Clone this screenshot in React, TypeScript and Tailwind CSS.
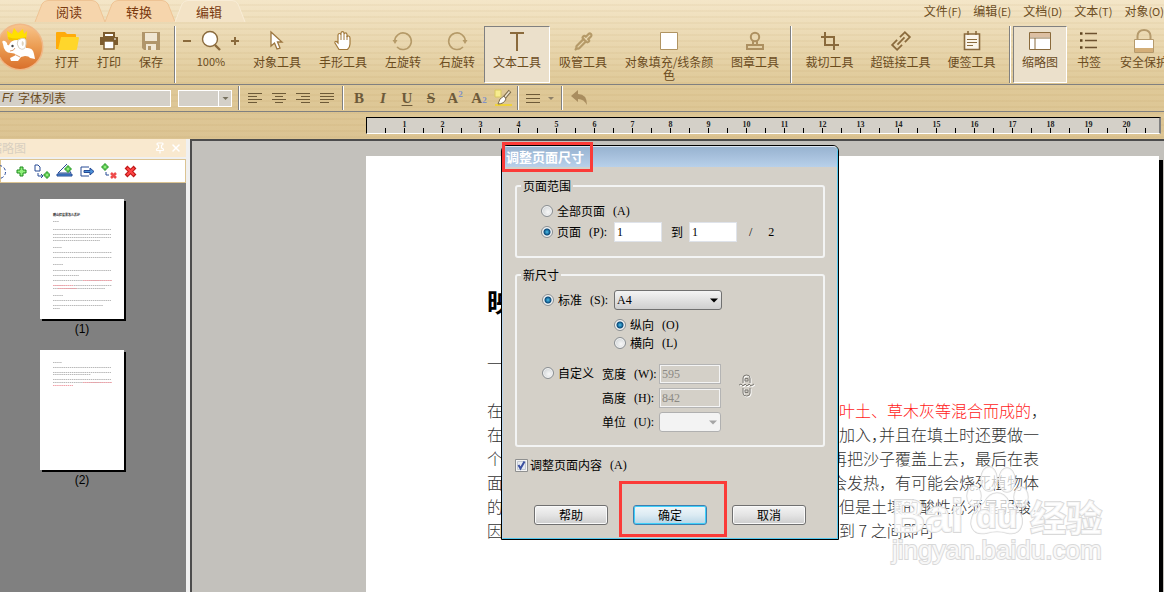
import { useState } from 'react';
import type { ReactNode } from 'react';
import { Pipette, Pin, X } from 'lucide-react';

const BROWN = '#8a6a3c';
const FADED = '#b59a68';

function Icon({ children, size = 22 }: { children: ReactNode; size?: number }) {
  return (
    <svg width={size} height={size} viewBox={`0 0 ${size} ${size}`} fill="none" className="shrink-0">
      {children}
    </svg>
  );
}

function Separator() {
  return <div className="mx-0.5 w-0.5 shrink-0 self-stretch border-l border-r border-l-[#808080] border-r-white" />;
}

interface ToolProps {
  label: string;
  width: string;
  selected?: boolean;
  children: ReactNode;
}

function Tool({ label, width, selected, children }: ToolProps) {
  return (
    <button
      type="button"
      className={`${width} flex shrink-0 flex-col items-center border pt-1 ${
        selected
          ? 'border-t-[#808080] border-r-white border-b-white border-l-[#808080] bg-[#ebe0cb]'
          : 'border-transparent'
      }`}
    >
      <span className="flex h-5 items-center justify-center">{children}</span>
      <span className="mt-1 w-full px-1 text-center text-xs leading-[13px]">{label}</span>
    </button>
  );
}

function Tab({ label, active }: { label: string; active?: boolean }) {
  return (
    <button type="button" className="relative h-[22px] w-[70px] text-[13px] leading-6 text-[#7a3a10]">
      <svg className="absolute inset-0" width="72" height="22" viewBox="0 0 72 22">
        <path
          d="M1 22 L8 4 Q10 0.5 14 0.5 H58 Q62 0.5 64 4 L71 22"
          fill={active ? '#f3e3c6' : '#f6d5ac'}
          stroke={active ? '#f8ecd6' : '#eec394'}
        />
      </svg>
      <span className="relative">{label}</span>
    </button>
  );
}

function Logo() {
  return (
    <svg width="48" height="50" viewBox="0 0 48 50" className="-ml-1 shrink-0">
      <defs>
        <linearGradient id="logo" x1="0" y1="0" x2="0" y2="1">
          <stop offset="0" stopColor="#f8c48a" />
          <stop offset="0.5" stopColor="#eb9c52" />
          <stop offset="1" stopColor="#d9702c" />
        </linearGradient>
      </defs>
      <circle cx="24" cy="25" r="23.5" fill="#f0b888" />
      <circle cx="24" cy="25" r="22" fill="url(#logo)" />
      <path d="M12 17 L11 9 L16 12 L18 6 L22 11 L27 7 L28 12 L31 9 L30 18 Z" fill="#ffe000" />
      <path d="M12 15 Q20 18 30 15 L30 18 Q22 20 13 18 Z" fill="#f2c200" />
      <path
        d="M7 22 Q5 18 9 19 L11 21 Q11 24 13 23 Q15 18 21 18 Q29 17 30 26 Q37 25 38 32 L39 37 L34 36 Q33 34 29 34 L25 35 L22 39 L15 39 L14 36 L20 33 Q19 31 15 31 Q8 31 7 22 Z"
        fill="#fff"
      />
      <path d="M22 18 Q31 13 30 22 Q29 30 23 26 Q20 22 22 18 Z" fill="#fff" stroke="#d8cfbe" />
      <path d="M26 19 Q29 20 27 24 Q25 24 26 19 Z" fill="#ddd2bd" />
      <circle cx="16.5" cy="24" r="1.2" fill="#444" />
      <path d="M14 29 Q18 29 19 26 M24 35 L20 33" stroke="#e0a070" fill="none" />
    </svg>
  );
}

function AlignIcon({ rows }: { rows: [number, number][] }) {
  return (
    <Icon size={14}>
      {rows.map(([start, end], i) => (
        <path key={i} d={`M${start} ${2.5 + i * 3} H${end}`} stroke="#6d5a38" />
      ))}
    </Icon>
  );
}

function FormatButton({ children, label }: { children: ReactNode; label: string }) {
  return (
    <button
      type="button"
      aria-label={label}
      className="flex w-6 shrink-0 items-center justify-center font-['Liberation_Serif',serif] text-[15px] font-bold text-[#6d5a3a]"
    >
      {children}
    </button>
  );
}

const menus = [
  ['文件', '(F)'],
  ['编辑', '(E)'],
  ['文档', '(D)'],
  ['文本', '(T)'],
  ['对象', '(O)'],
];

function TopRow() {
  return (
    <div className="flex h-[22px] justify-between overflow-hidden">
      <div className="flex pl-[34px]">
        <Tab label="阅读" />
        <Tab label="转换" />
        <Tab label="编辑" active />
      </div>
      <nav className="flex gap-3 text-xs leading-5">
        {menus.map(([name, key]) => (
          <button key={name} type="button" className="whitespace-nowrap">
            {name}
            <span className="text-[11px]">{key}</span>
          </button>
        ))}
      </nav>
    </div>
  );
}

function Toolbar() {
  return (
    <div className="flex h-[62px] items-start overflow-hidden">
      <Logo />
      <div className="ml-0.5 mt-1 flex h-[57px] min-w-0 items-stretch">
        <Tool label="打开" width="w-[42px]">
          <Icon size={24}>
            <path d="M1 4 Q1 3 2 3 H10 L12 5 H20 Q21 5 21 6 V20 H1 Z" fill="#ffab0a" />
            <path d="M6 8 H23 Q24 8 24 9 L22 20 Q22 21 21 21 H3 Z" fill="#ffd62b" />
          </Icon>
        </Tool>
        <Tool label="打印" width="w-[42px]">
          <Icon>
            <path d="M6 3 H16 V7 H6 Z" fill="#fff" stroke="#7d5c2e" strokeWidth="2" />
            <path d="M2 7 H20 V15 H2 Z" fill="#7d5c2e" />
            <path d="M6 11 H16 V19 H6 Z" fill="#fff" stroke="#7d5c2e" strokeWidth="1.5" />
            <path d="M16 9 H18" stroke="#fff" />
          </Icon>
        </Tool>
        <Tool label="保存" width="w-[42px]">
          <Icon>
            <path d="M2 2 H20 V20 H4 L2 18 Z" fill="#b0956a" />
            <path d="M5 3 H17 V11 H5 Z" fill="#f0e6d2" />
            <path d="M6 14 H16 V20 H6 Z" fill="#f0e6d2" />
            <path d="M8 16 H11 V20 H8 Z" fill="#b0956a" />
          </Icon>
        </Tool>
        <Separator />
        <div className="flex w-[66px] shrink-0 flex-col items-center pt-[5px]">
          <div className="flex h-5 w-full items-center justify-between px-1">
            <button type="button" aria-label="缩小">
              <Icon size={10}>
                <path d="M1 5 H9" stroke={BROWN} strokeWidth="2" />
              </Icon>
            </button>
            <Icon>
              <circle cx="10" cy="9" r="7.5" fill="#fff" stroke={BROWN} strokeWidth="1.4" />
              <path d="M15 15 L20 20" stroke={BROWN} strokeWidth="2.4" />
            </Icon>
            <button type="button" aria-label="放大">
              <Icon size={10}>
                <path d="M1 5 H9 M5 1 V9" stroke={BROWN} strokeWidth="2" />
              </Icon>
            </button>
          </div>
          <span className="mt-1 text-[11px] leading-[13px]">100%</span>
        </div>
        <Tool label="对象工具" width="w-[66px]">
          <Icon>
            <path d="M5 2 V16 L8.5 13 L11 19 L14 18 L11.5 12 H16 Z" fill="#fff" stroke="#9c7640" strokeWidth="1.3" />
          </Icon>
        </Tool>
        <Tool label="手形工具" width="w-[66px]">
          <Icon>
            <path
              d="M7 19.5 L3 13 Q2.5 11 4.5 11.5 L6 13 V5 Q6.2 3.5 7.5 3.5 Q8.7 3.5 9 5 V3 Q9.2 1.7 10.5 1.7 Q11.8 1.7 12 3 V4 Q12.3 2.8 13.5 2.8 Q14.8 2.8 15 4.5 V7 Q15.5 5.8 16.5 6 Q18 6.2 18 8 V14 Q18 17 15.5 19.5 Z"
              fill="#fff"
              stroke="#a27a3c"
              strokeWidth="1.2"
            />
            <path d="M9 5 V10 M12 4 V10 M15 6 V10" stroke="#a27a3c" />
          </Icon>
        </Tool>
        <Tool label="左旋转" width="w-[54px]">
          <Icon>
            <path d="M5 17 A8.3 8.3 0 1 0 2.7 11" stroke={FADED} strokeWidth="1.6" />
            <path d="M0.5 10 H5.5 L3 14 Z" fill={FADED} />
          </Icon>
        </Tool>
        <Tool label="右旋转" width="w-[54px]">
          <Icon>
            <path d="M17 17 A8.3 8.3 0 1 1 19.3 11" stroke={FADED} strokeWidth="1.6" />
            <path d="M21.5 10 H16.5 L19 14 Z" fill={FADED} />
          </Icon>
        </Tool>
        <Tool label="文本工具" width="w-[66px]" selected>
          <Icon>
            <path d="M4 3 H18 M11 3 V21" stroke={BROWN} strokeWidth="2" />
          </Icon>
        </Tool>
        <Tool label="吸管工具" width="w-[66px]">
          <Pipette size={19} color={FADED} strokeWidth={2.8} />
        </Tool>
        <Tool label="对象填充/线条颜色" width="w-[106px]">
          <Icon>
            <path d="M2.5 2.5 H19.5 V19.5 H2.5 Z" fill="#fff" stroke="#b09462" />
          </Icon>
        </Tool>
        <Tool label="图章工具" width="w-[66px]">
          <Icon>
            <circle cx="11" cy="7" r="4.2" stroke="#ad9060" strokeWidth="2" />
            <path d="M9 11 V15 M13 11 V15" stroke="#ad9060" strokeWidth="2" />
            <path d="M3 15 H19 V19 H3 Z" stroke="#ad9060" strokeWidth="2" />
          </Icon>
        </Tool>
        <Separator />
        <Tool label="裁切工具" width="w-[71px]">
          <Icon>
            <path d="M6 2 V15 H20 M2 7 H15 V20" stroke={BROWN} strokeWidth="2" />
          </Icon>
        </Tool>
        <Tool label="超链接工具" width="w-[71px]">
          <Icon>
            <g transform="rotate(-45 11 11)" stroke={BROWN} strokeWidth="1.8">
              <path d="M9 7.5 H2 V14.5 H9 M13 7.5 H20 V14.5 H13" />
              <path d="M6 11 H16" />
            </g>
          </Icon>
        </Tool>
        <Tool label="便签工具" width="w-[71px]">
          <Icon>
            <path d="M3.5 4 H18.5 V19.5 H3.5 Z" fill="#fbf5ea" stroke={BROWN} strokeWidth="1.6" />
            <path d="M7 1 V5 M15 1 V5" stroke={BROWN} strokeWidth="1.6" />
            <path d="M6 9.5 H16 M6 12.5 H16 M6 15.5 H12" stroke={BROWN} />
          </Icon>
        </Tool>
        <Separator />
        <Tool label="缩略图" width="w-[54px]" selected>
          <Icon>
            <path d="M0.5 2.5 H21.5 V19.5 H0.5 Z" fill="#fff" stroke={BROWN} />
            <path d="M1 3 H21 V7 H1 Z" fill="#dcbfa2" />
            <path d="M1 8 H21 M6 8 V19" stroke={BROWN} />
          </Icon>
        </Tool>
        <Tool label="书签" width="w-11">
          <Icon>
            <path d="M2 3.5 H4.5 M2 10.5 H4.5 M2 17.5 H4.5" stroke="#5e4420" strokeWidth="2.4" />
            <path d="M7 3.5 H19 M7 10.5 H19 M7 17.5 H19" stroke="#6d5230" strokeWidth="1.6" />
          </Icon>
        </Tool>
        <Tool label="安全保护" width="w-[66px]">
          <Icon size={24}>
            <path d="M5.5 11 V7 Q6 1 12 1 Q18 1 18.5 7 V11" stroke="#b59a6c" strokeWidth="2" />
            <path d="M2.5 10.5 H21.5 V23.5 H2.5 Z" fill="#fff" stroke="#b59a6c" />
            <path d="M3 19 H21 V23 H3 Z" fill="#d3ae78" />
          </Icon>
        </Tool>
      </div>
    </div>
  );
}

function FormatBar() {
  return (
    <div className="flex h-[27px] items-center border-t border-[#808080]">
      <label className="flex h-[17px] w-[171px] shrink-0 items-center gap-1 border border-l-0 border-white bg-[#d4d0c8] pl-0.5">
        <span className="w-3 font-['Liberation_Sans',sans-serif] text-xs italic leading-4">Ff</span>
        <input aria-label="字体" defaultValue="字体列表" className="min-w-0 flex-1 bg-transparent text-xs leading-4 outline-none" />
      </label>
      <div className="relative ml-[7px] w-[54px] shrink-0">
        <select aria-label="字号" className="block h-[17px] w-full appearance-none border border-white bg-[#d4d0c8] text-xs">
          <option />
        </select>
        <svg className="pointer-events-none absolute top-0 right-0" width="14" height="17" viewBox="0 0 14 17">
          <path d="M0.5 0 V17" stroke="#fff" />
          <path d="M4.5 7 H10.5 L7.5 10 Z" fill="#77715f" />
        </svg>
      </div>
      <div className="ml-1 flex h-6 items-stretch">
        <Separator />
        <div className="flex px-px">
          <FormatButton label="左对齐">
            <AlignIcon rows={[[0, 14], [0, 9], [0, 14], [0, 9]]} />
          </FormatButton>
          <FormatButton label="居中">
            <AlignIcon rows={[[0, 14], [3, 11], [0, 14], [3, 11]]} />
          </FormatButton>
          <FormatButton label="右对齐">
            <AlignIcon rows={[[0, 14], [5, 14], [0, 14], [5, 14]]} />
          </FormatButton>
          <FormatButton label="两端对齐">
            <AlignIcon rows={[[0, 14], [0, 14], [0, 14], [0, 9]]} />
          </FormatButton>
        </div>
        <Separator />
        <div className="flex pl-px">
          <FormatButton label="粗体">B</FormatButton>
          <FormatButton label="斜体">
            <span className="italic">I</span>
          </FormatButton>
          <FormatButton label="下划线">
            <span className="underline underline-offset-2">U</span>
          </FormatButton>
          <FormatButton label="删除线">
            <span className="line-through">S</span>
          </FormatButton>
          <FormatButton label="上标">
            A<sup className="text-[9px] text-[#8090c8]">2</sup>
          </FormatButton>
          <FormatButton label="下标">
            A<sub className="text-[9px] text-[#8090c8]">2</sub>
          </FormatButton>
          <FormatButton label="高亮">
            <Icon size={20}>
              <path d="M2 2 H8 V9 H2 Z" fill="#f7ec8e" stroke="#d8c860" />
              <path d="M2 16 H19 V18 H2 Z" fill="#f0d23c" />
              <path d="M17 3 L11 10" stroke="#7a6a4a" strokeWidth="3.5" />
              <path d="M16.5 3.5 L12 9" stroke="#eee6d4" strokeWidth="1.5" />
              <path d="M11 8 Q6 10 5 16 Q11 16 13 11 Z" fill="#fff" stroke="#7a6a4a" />
            </Icon>
          </FormatButton>
        </div>
        <Separator />
        <button type="button" aria-label="行距" className="flex w-[38px] items-center gap-2 pl-1">
          <Icon size={15}>
            <path d="M1 3.5 H15 M1 7.5 H15 M1 11.5 H15" stroke="#6d5a38" />
          </Icon>
          <Icon size={6}>
            <path d="M0 2 H6 L3 5 Z" fill="#8d8068" />
          </Icon>
        </button>
        <Separator />
        <button type="button" aria-label="撤销" className="flex w-7 items-center justify-center">
          <Icon size={18}>
            <path d="M1 7 L8 1 V5 Q17 5 17 16 Q14 10 8 10 V13 Z" fill="#a98d5f" />
          </Icon>
        </button>
      </div>
    </div>
  );
}

function Ruler() {
  const marks = Array.from({ length: 20 }, (_, i) => i + 1);
  return (
    <div className="flex h-7 border-t border-[#808080] pt-[5px] pr-[3px] pl-[366px]">
      <div className="flex h-[17px] min-w-0 flex-1 overflow-hidden border-t border-r-2 border-b border-l border-t-black border-r-[#808080] border-b-white border-l-black bg-[#d4d0c8]">
        <div className="flex pl-[18px]">
          {marks.map((n) => (
            <div key={n} className="flex w-[38px] shrink-0 items-end border-black">
              <span className="h-[5px] w-px bg-black" />
              <span className="flex h-full flex-1 flex-col items-center justify-between">
                <span className="pt-[3px] font-['Liberation_Serif',serif] text-[8px] leading-[7px] font-bold text-[#222]">{n}</span>
                <span className="h-[5px] w-px bg-black" />
              </span>
            </div>
          ))}
          <span className="h-[5px] w-px self-end bg-black" />
        </div>
      </div>
    </div>
  );
}

// y position, width and an optional red part for each line of a page preview
type PreviewLine = [number, number, number?, number?];

const pageOne: PreviewLine[] = [
  [22, 6], [30, 58], [35, 58], [38, 58], [41, 47],
  [48, 9], [53, 59], [58, 59], [65, 10], [71, 58], [76, 26],
  [81, 59, 30, 59], [86, 59, 0, 20], [89, 52, 5, 24],
  [96, 10], [101, 58], [106, 50], [109, 7],
];

const pageTwo: PreviewLine[] = [
  [12, 9], [17, 58], [22, 58], [24, 38], [29, 58], [32, 58, 30, 59], [35, 0, 0, 20],
];

function Thumbnail({ page, title, lines }: { page: number; title?: string; lines: PreviewLine[] }) {
  return (
    <figure className="flex flex-col items-center">
      <svg width="84" height="120" viewBox="0 0 84 120" className="bg-white shadow-[2px_2px_0_#000]">
        {title && (
          <text x="13" y="17" fontSize="3" fontWeight="bold" fill="#111">
            {title}
          </text>
        )}
        {lines.map(([y, width, from, to]) => (
          <g key={y} strokeDasharray="1.5 0.6">
            <path d={`M13 ${y + 0.5} h${width}`} stroke="#b9b9b9" />
            {to && <path d={`M${13 + (from ?? 0)} ${y + 0.5} H${13 + to}`} stroke="#f2a0a8" />}
          </g>
        ))}
      </svg>
      <figcaption className="mt-0.5 font-['Liberation_Sans',sans-serif] text-xs leading-4 text-black">({page})</figcaption>
    </figure>
  );
}

function ThumbnailPanel() {
  return (
    <aside className="flex w-[190px] shrink-0 flex-col border-r-4 border-[#f0f0f0] bg-[#808080]">
      <div className="flex h-5 items-center gap-1 border-b-2 border-[#f0f0f0] bg-[#f9e9cf] pr-1 text-white">
        <h2 className="-ml-[10px] flex-1 text-xs leading-[18px] text-[#d8cfc0]">缩略图</h2>
        <Pin size={12} strokeWidth={2.4} />
        <X size={12} strokeWidth={3} />
      </div>
      <div className="flex h-6 items-center border border-[#dcc492] bg-white">
        <div className="-ml-[13px] flex items-center gap-1">
          <Icon size={18}>
            <circle cx="11" cy="10" r="6.5" stroke="#2a4a98" strokeDasharray="3 2" />
          </Icon>
          <Icon size={18}>
            <path d="M10 5 H13 V8 H16 V11 H13 V14 H10 V11 H7 V8 H10 Z" fill="#8ff07a" stroke="#1d8a1d" />
          </Icon>
          <Icon size={18}>
            <path d="M3 3 H6 L8 5 V9 H3 Z" stroke="#264a94" />
            <path d="M6 11 V14 H10 M9 12 L11 14 L9 16" stroke="#264a94" />
            <path d="M14 10 H16 V12 H18 V14 H16 V16 H14 V14 H12 V12 H14 Z" fill="#8ff07a" stroke="#2a9a2a" />
          </Icon>
          <Icon size={20}>
            <path d="M13 3 L4 12 H17 L15 9" stroke="#264a94" />
            <path d="M3 13 H18 V15 H3 Z" fill="#4a90d8" stroke="#264a94" />
            <path d="M13 5 H15 V7 H17 V9 H15 V11 H13 V9 H11 V7 H13 Z" fill="#8ff07a" stroke="#2a9a2a" />
          </Icon>
          <Icon size={18}>
            <path d="M11 5 H3 V14 H11" stroke="#264a94" />
            <path d="M6 8.5 H12 V6 L16 9.5 L12 13 V10.5 H6 Z" fill="#4a90d8" stroke="#264a94" />
          </Icon>
          <Icon size={18}>
            <path d="M4 2 H6 V4 H8 V6 H6 V8 H4 V6 H2 V4 H4 Z" fill="#8ff07a" stroke="#2a9a2a" />
            <path d="M6 10 V13 H9" stroke="#264a94" />
            <path d="M11 11 L16 16 M16 11 L11 16" stroke="#ee4b4b" strokeWidth="2.5" />
          </Icon>
          <Icon size={18}>
            <path d="M4 5 L13 14 M13 5 L4 14" stroke="#c01818" strokeWidth="4" />
            <path d="M5 6 L12 13 M12 6 L5 13" stroke="#ff4545" strokeWidth="2" />
          </Icon>
        </div>
      </div>
      <div className="flex flex-col items-center gap-[13px] pt-4 pr-[22px]">
        <Thumbnail page={1} title="映山红盆景怎么养护" lines={pageOne} />
        <Thumbnail page={2} lines={pageTwo} />
      </div>
    </aside>
  );
}

interface DocLine {
  start: string;
  end: string;
  red?: boolean;
  halfComma?: boolean;
  wide?: boolean;
}

const docLines: DocLine[] = [
  { start: '在', end: '叶土、草木灰等混合而成的', red: true },
  { start: '在', end: '加入，并且在填土时还要做一', halfComma: true },
  { start: '个', end: '再把沙子覆盖上去，最后在表', wide: true },
  { start: '面', end: '会发热，有可能会烧死植物体', wide: true },
  { start: '的', end: '但是土壤的酸性必须是弱酸，' },
  { start: '因', end: '到 7 之间即可' },
];

function Page() {
  return (
    <article className="flex-1 overflow-hidden bg-white pt-[125px] pl-[121px] text-base leading-6 font-light text-[#333]">
      <h1 className="text-[26px] leading-10 font-bold text-black">映</h1>
      <p className="pt-[30px]">一</p>
      <div className="pt-[23px]">
        {docLines.map((line, i) => (
          <p key={i} className="flex whitespace-nowrap">
            <span className={line.wide ? 'w-[344px]' : 'w-[352px]'}>{line.start}</span>
            <span className={line.red ? 'text-[#ff1a1a]' : line.halfComma ? "[font-feature-settings:'halt']" : ''}>{line.end}</span>
            {line.red && <span>，</span>}
          </p>
        ))}
      </div>
    </article>
  );
}

function Watermark() {
  return (
    <div
      className="pointer-events-none absolute right-[62px] bottom-7 w-[210px] font-['Liberation_Sans',sans-serif] text-white/80 [-webkit-text-stroke:2px_#d9d9d9] [paint-order:stroke_fill]"
      aria-hidden="true"
    >
      <div className="flex items-end justify-between font-bold">
        <span className="text-[46px] leading-10">Bai</span>
        <span className="relative flex h-[70px] w-16 items-end justify-center">
          <svg className="absolute inset-0" width="64" height="70" viewBox="0 0 64 70" fill="#fff" fillOpacity="0.7" stroke="#d9d9d9" strokeWidth="1.5">
            <ellipse cx="9" cy="30" rx="7" ry="10" />
            <ellipse cx="24" cy="13" rx="8" ry="12" />
            <ellipse cx="42" cy="14" rx="8" ry="12" />
            <ellipse cx="56" cy="31" rx="7" ry="10" />
            <path d="M32 27 Q40 27 44 36 Q59 46 57 58 Q54 70 42 67 Q32 64 22 67 Q8 70 6 58 Q6 46 19 37 Q24 27 32 27 Z" />
          </svg>
          <span className="relative text-[34px] leading-10">du</span>
        </span>
        <span className="font-['Noto_Sans_CJK_SC',sans-serif] text-4xl">经验</span>
      </div>
      <div className="text-[26px] leading-7">jingyan.baidu.com</div>
    </div>
  );
}

const radioClass =
  'size-3 shrink-0 appearance-none rounded-full border border-[#8a8f93] bg-[radial-gradient(circle_at_60%_60%,#f8f8f8,#c4c9cc)] shadow-[inset_0_0_0_1px_#f4f4f4] checked:bg-[radial-gradient(circle,#4cc3f0_0,#0b4a7a_3px,#e4e8ea_4px)]';

interface RadioProps {
  name: string;
  label: string;
  hotkey?: string;
  checked: boolean;
  onChange: () => void;
}

function Radio({ name, label, hotkey, checked, onChange }: RadioProps) {
  return (
    <label className="flex h-[18px] items-center gap-1 whitespace-nowrap">
      <input type="radio" name={name} checked={checked} onChange={onChange} className={radioClass} />
      <LabelText label={label} hotkey={hotkey} />
    </label>
  );
}

function LabelText({ label, hotkey }: { label: string; hotkey?: string }) {
  return (
    <span className="flex gap-2 whitespace-nowrap">
      {label}
      {hotkey && <span className="font-['Liberation_Serif',serif]">{hotkey}</span>}
    </span>
  );
}

const fieldClass = "h-5 border border-[#dfe3ea] bg-white px-0.5 font-['Liberation_Serif',serif] text-xs outline-none";
const disabledFieldClass =
  "h-5 w-[62px] border border-[#b4b4b4] bg-[#d4d0c8] px-0.5 font-['Liberation_Serif',serif] text-xs text-[#8c8a84] shadow-[inset_0_0_0_1px_#f4f4f4]";
const buttonClass = 'h-5 w-[74px] rounded-[3px] border text-xs leading-4';
const plainButton = 'border-[#707070] bg-linear-to-b from-[#f4f4f4] via-[#e4e4e4] to-[#cdcdcd] shadow-[inset_0_0_0_1px_#fafafa]';
const defaultButton = 'border-[#3c7fb1] bg-linear-to-b from-[#f0f7fa] via-[#dcebf3] to-[#b8d6e6] shadow-[inset_0_0_0_1px_#3fd0fa]';

function PageSizeDialog() {
  const [range, setRange] = useState('pages');
  const [size, setSize] = useState('standard');
  const [orientation, setOrientation] = useState('portrait');
  const [resizeContent, setResizeContent] = useState(true);

  return (
    <div
      role="dialog"
      aria-labelledby="dialog-title"
      className="absolute top-1 left-[309px] w-[338px] rounded-t-md border border-black bg-[#d4d0c8] text-xs leading-[14px] text-black"
    >
      <div className="rounded-t-[5px] border border-t-[#dbe6f2] border-r-[#56c8ee] border-b-[#56c8ee] border-l-[#b4d4ee]">
        <h2
          id="dialog-title"
          className="h-5 rounded-t-[4px] bg-linear-to-b from-[#98b3d0] to-[#b8d0ea] pl-[3px] text-[13px] leading-5 font-bold text-white"
        >
          调整页面尺寸
        </h2>
        <form className="px-3 pt-3 pb-[13px]" onSubmit={(e) => e.preventDefault()}>
          {/* 页面范围 */}
          <fieldset className="rounded-[3px] border-2 border-[#f3f4f4] pt-[9px] pb-3.5 pl-6">
            <legend className="-ml-5 px-0.5">页面范围</legend>
            <Radio name="range" label="全部页面" hotkey="(A)" checked={range === 'all'} onChange={() => setRange('all')} />
            <div className="mt-0.5 flex h-5 items-center">
              <div className="w-[73px] shrink-0">
                <Radio name="range" label="页面" hotkey="(P):" checked={range === 'pages'} onChange={() => setRange('pages')} />
              </div>
              <input aria-label="起始页" defaultValue="1" className={`${fieldClass} w-12`} />
              <label htmlFor="last-page" className="ml-[9px] pr-1.5">
                到
              </label>
              <input id="last-page" defaultValue="1" className={`${fieldClass} w-12`} />
              <span className="ml-3 font-['Liberation_Serif',serif]">/</span>
              <span className="ml-4 font-['Liberation_Serif',serif]">2</span>
            </div>
          </fieldset>

          {/* 新尺寸 */}
          <fieldset className="mt-2.5 rounded-[3px] border-2 border-[#f3f4f4] pt-2 pb-[13px] pl-[25px]">
            <legend className="-ml-[21px] px-0.5">新尺寸</legend>
            <div className="flex h-5 items-center">
              <div className="w-[72px] shrink-0">
                <Radio name="size" label="标准" hotkey="(S):" checked={size === 'standard'} onChange={() => setSize('standard')} />
              </div>
              <div className="relative w-[108px]">
                <select
                  aria-label="标准"
                  className="block h-5 w-full appearance-none rounded-[3px] border border-[#707070] bg-linear-to-b from-[#f4f4f4] to-[#cfcfcf] px-0.5 font-['Liberation_Serif',serif] text-xs"
                >
                  <option>A4</option>
                </select>
                <svg className="pointer-events-none absolute top-2 right-1" width="8" height="5" viewBox="0 0 8 5">
                  <path d="M0 0.5 H8 L4 4.5 Z" fill="#000" />
                </svg>
              </div>
            </div>
            <div className="mt-1.5 pl-[72px]">
              <Radio name="orientation" label="纵向" hotkey="(O)" checked={orientation === 'portrait'} onChange={() => setOrientation('portrait')} />
              <Radio name="orientation" label="横向" hotkey="(L)" checked={orientation === 'landscape'} onChange={() => setOrientation('landscape')} />
            </div>
            <div className="mt-3 flex items-start">
              <div className="w-[60px] shrink-0">
                <Radio name="size" label="自定义" checked={size === 'custom'} onChange={() => setSize('custom')} />
              </div>
              <div className="grid grid-cols-[57px_62px] items-center gap-y-1">
                <label htmlFor="width">
                  <LabelText label="宽度" hotkey="(W):" />
                </label>
                <input id="width" defaultValue="595" disabled className={disabledFieldClass} />
                <label htmlFor="height">
                  <LabelText label="高度" hotkey="(H):" />
                </label>
                <input id="height" defaultValue="842" disabled className={disabledFieldClass} />
                <label htmlFor="unit">
                  <LabelText label="单位" hotkey="(U):" />
                </label>
                <div className="relative">
                  <select id="unit" disabled className="block h-5 w-full appearance-none rounded-[3px] border border-[#b0b0b0] bg-[#f3f3f3]">
                    <option />
                  </select>
                  <svg className="pointer-events-none absolute top-2 right-1" width="8" height="5" viewBox="0 0 8 5">
                    <path d="M0 0.5 H8 L4 4.5 Z" fill="#a5a5a5" />
                  </svg>
                </div>
              </div>
              <svg width="16" height="24" viewBox="0 0 16 24" className="mt-2.5 ml-[18px] shrink-0" fill="none">
                <g stroke="#fff" transform="translate(1 1)">
                  <path d="M4 9 V4 Q4 1 7.5 1 Q11 1 11 4 V9 M4 14 V19 Q4 22 7.5 22 Q11 22 11 19 V14" />
                  <path d="M0 11 L2 10 L4 12 L6 10 L8 12 L10 10 L12 12 L15 10" />
                </g>
                <g stroke="#7d7b76">
                  <path d="M4 9 V4 Q4 1 7.5 1 Q11 1 11 4 V9 M4 14 V19 Q4 22 7.5 22 Q11 22 11 19 V14" />
                  <path d="M6 7 V4.5 H9 V7 H6 M6 16 V18.5 H9 V16 H6" />
                  <path d="M0 11 L2 10 L4 12 L6 10 L8 12 L10 10 L12 12 L15 10" />
                </g>
              </svg>
            </div>
          </fieldset>

          <label className="mt-2.5 flex h-4 items-center gap-0.5">
            <input
              type="checkbox"
              checked={resizeContent}
              onChange={(e) => setResizeContent(e.target.checked)}
              className="peer sr-only"
            />
            <svg width="13" height="13" viewBox="0 0 13 13" className="shrink-0" aria-hidden="true">
              <path d="M0.5 0.5 H12.5 V12.5 H0.5 Z" fill="#f4f4f4" stroke="#8e8f8f" />
              <path d="M2.5 2.5 H10.5 V10.5 H2.5 Z" fill="#e6eaf0" stroke="#c3c9d2" />
              {resizeContent && <path d="M3.5 6 L5.5 9.5 L9.5 2.5" fill="none" stroke="#3a4fa0" strokeWidth="2" />}
            </svg>
            <LabelText label="调整页面内容" hotkey="(A)" />
          </label>

          <div className="mt-8 flex justify-center gap-[25px]">
            <button type="button" className={`${buttonClass} ${plainButton}`}>
              帮助
            </button>
            <div className="relative flex">
              <button type="submit" className={`${buttonClass} ${defaultButton}`}>
                确定
              </button>
              <div className="pointer-events-none absolute -top-6 -right-5 -bottom-3 -left-3.5 border-3 border-[#fb3b38]" />
            </div>
            <button type="button" className={`${buttonClass} ${plainButton}`}>
              取消
            </button>
          </div>
        </form>
      </div>
      <div className="pointer-events-none absolute -top-1 left-0 h-[30px] w-[91px] border-3 border-[#fb3b38]" />
    </div>
  );
}

export default function App() {
  return (
    <div className="flex min-h-screen flex-col overflow-hidden bg-[#c3c1bc] font-['Noto_Sans_CJK_SC','Liberation_Sans',sans-serif] text-[#6b4c1e]">
      <header className="bg-[repeating-linear-gradient(to_bottom,transparent_0,transparent_4px,rgba(150,105,30,0.05)_4px,rgba(150,105,30,0.05)_6px),linear-gradient(to_bottom,#f4e6c8,#dfc998_84px,#dcc493)]">
        <TopRow />
        <Toolbar />
        <FormatBar />
        <Ruler />
      </header>
      <div className="flex flex-1">
        <ThumbnailPanel />
        <main className="relative flex min-w-0 flex-1 border-t-2 border-l-2 border-[#4c4c4c] pt-[15px] pr-[5px] pl-[174px]">
          <Page />
          <div className="-mr-1 mt-1 w-1 shrink-0 bg-black" />
          <PageSizeDialog />
          <Watermark />
        </main>
      </div>
    </div>
  );
}
